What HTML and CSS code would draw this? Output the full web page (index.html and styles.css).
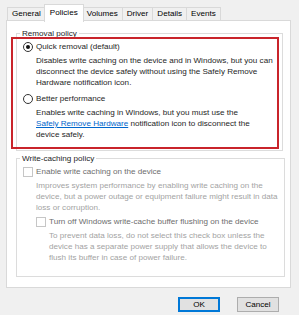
FILE: index.html
```html
<!DOCTYPE html>
<html lang="en">
<head>
    <meta charset="UTF-8">
    <title>Properties - Policies</title>
    <link rel="stylesheet" href="styles.css">
</head>
<body>
    <div class="dialog">
        <div class="tabs">
            <div class="tab">General</div>
            <div class="tab active">Policies</div>
            <div class="tab">Volumes</div>
            <div class="tab">Driver</div>
            <div class="tab">Details</div>
            <div class="tab">Events</div>
        </div>

        <div class="panel">
            <fieldset class="group removal">
                <legend>Removal policy</legend>
                <div class="option">
                    <span class="radio checked"></span>
                    <span>Quick removal (default)</span>
                </div>
                <p class="desc">Disables write caching on the device and in Windows, but you can<br>disconnect the device safely without using the Safely Remove<br>Hardware notification icon.</p>
                <div class="option second">
                    <span class="radio"></span>
                    <span>Better performance</span>
                </div>
                <p class="desc">Enables write caching in Windows, but you must use the<br><a class="link">Safely Remove Hardware</a> notification icon to disconnect the<br>device safely.</p>
            </fieldset>

            <fieldset class="group caching">
                <legend>Write-caching policy</legend>
                <div class="option disabled">
                    <span class="check"></span>
                    <span>Enable write caching on the device</span>
                </div>
                <p class="desc disabled">Improves system performance by enabling write caching on the<br>device, but a power outage or equipment failure might result in data<br>loss or corruption.</p>
                <div class="option disabled nested">
                    <span class="check"></span>
                    <span>Turn off Windows write-cache buffer flushing on the device</span>
                </div>
                <p class="desc disabled nested">To prevent data loss, do not select this check box unless the<br>device has a separate power supply that allows the device to<br>flush its buffer in case of power failure.</p>
            </fieldset>

            <!-- annotation box drawn over the removal policy group -->
            <div class="highlight"></div>
        </div>

        <div class="buttons">
            <button class="btn default">OK</button>
            <button class="btn">Cancel</button>
        </div>
    </div>
</body>
</html>
```

FILE: styles.css
```css
body {
    margin: 0;
    width: 299px;
    height: 315px;
    overflow: hidden;
    background-color: #f0f0f0;
    font-family: "Liberation Sans", Arial, sans-serif;
    font-size: 8.1px;
    line-height: 11px;
    color: #000;
}

.dialog {
    padding: 4px 8px 0 6px;
}

/* Tab strip */
.tabs {
    display: flex;
    height: 16px;
    padding-left: 1px;
}

.tab {
    margin-top: 3px;
    height: 13px;
    padding: 0 4px;
    line-height: 12px;
    border: 1px solid #d9d9d9;
    border-bottom: none;
    border-left: none;
    background-color: #f0f0f0;
}

.tab:first-child {
    border-left: 1px solid #d9d9d9;
}

.tab.active {
    margin: 0 -1px -1px -2px;
    height: 17px;
    padding: 0 5px;
    line-height: 15px;
    border-left: 1px solid #d9d9d9;
    background-color: #fff;
    position: relative;
    z-index: 1;
}

/* Page */
.panel {
    box-sizing: border-box;
    height: 268px;
    padding-top: 7px;
    background-color: #fff;
    border: 1px solid #d9d9d9;
    position: relative;
}

.group {
    margin: 0 7px 0 9px;
    padding: 0 6px 10px 6px;
    border: 1px solid #dcdcdc;
}

.group legend {
    margin-left: -3px;
    padding: 0 2px;
    color: #1e1e1e;
}

.group.caching {
    margin-top: 2px;
    padding-bottom: 13px;
}

.option {
    display: flex;
    align-items: center;
    gap: 3px;
    margin-top: 2px;
    white-space: nowrap;
    color: #1e1e1e;
}

.option.second {
    margin-top: 5px;
}

.option.disabled {
    color: #6d6d6d;
}

.desc {
    margin: 3px 0 0 13px;
    white-space: nowrap;
    color: #1e1e1e;
}

.desc.disabled {
    color: #a3a3a3;
}

.option.nested {
    margin: 3px 0 0 13px;
}

.desc.nested {
    margin-left: 26px;
}

.link {
    color: #0066cc;
    text-decoration: underline;
}

/* Radio and check boxes */
.radio {
    box-sizing: border-box;
    width: 10px;
    height: 10px;
    border: 1px solid #333;
    border-radius: 50%;
    background-color: #fff;
    display: flex;
    align-items: center;
    justify-content: center;
}

.radio.checked::after {
    content: "";
    width: 4px;
    height: 4px;
    border-radius: 50%;
    background-color: #111;
}

.check {
    box-sizing: border-box;
    width: 10px;
    height: 10px;
    border: 1px solid #c6c6c6;
    background-color: #fff;
}

/* Red annotation frame */
.highlight {
    position: absolute;
    left: 4px;
    top: 16px;
    width: 264px;
    height: 108px;
    border: 2px solid #c9242b;
}

/* Dialog buttons */
.buttons {
    display: flex;
    justify-content: flex-end;
    gap: 17px;
    margin-top: 9px;
    padding-right: 12px;
}

.btn {
    box-sizing: border-box;
    width: 42px;
    height: 15px;
    padding: 0;
    font-family: "Liberation Sans", Arial, sans-serif;
    font-size: 8.1px;
    color: #000;
    background-color: #e1e1e1;
    border: 1px solid #adadad;
}

.btn.default {
    border: 1px solid #0078d7;
    box-shadow: inset 0 0 0 1px #0078d7;
}
```
